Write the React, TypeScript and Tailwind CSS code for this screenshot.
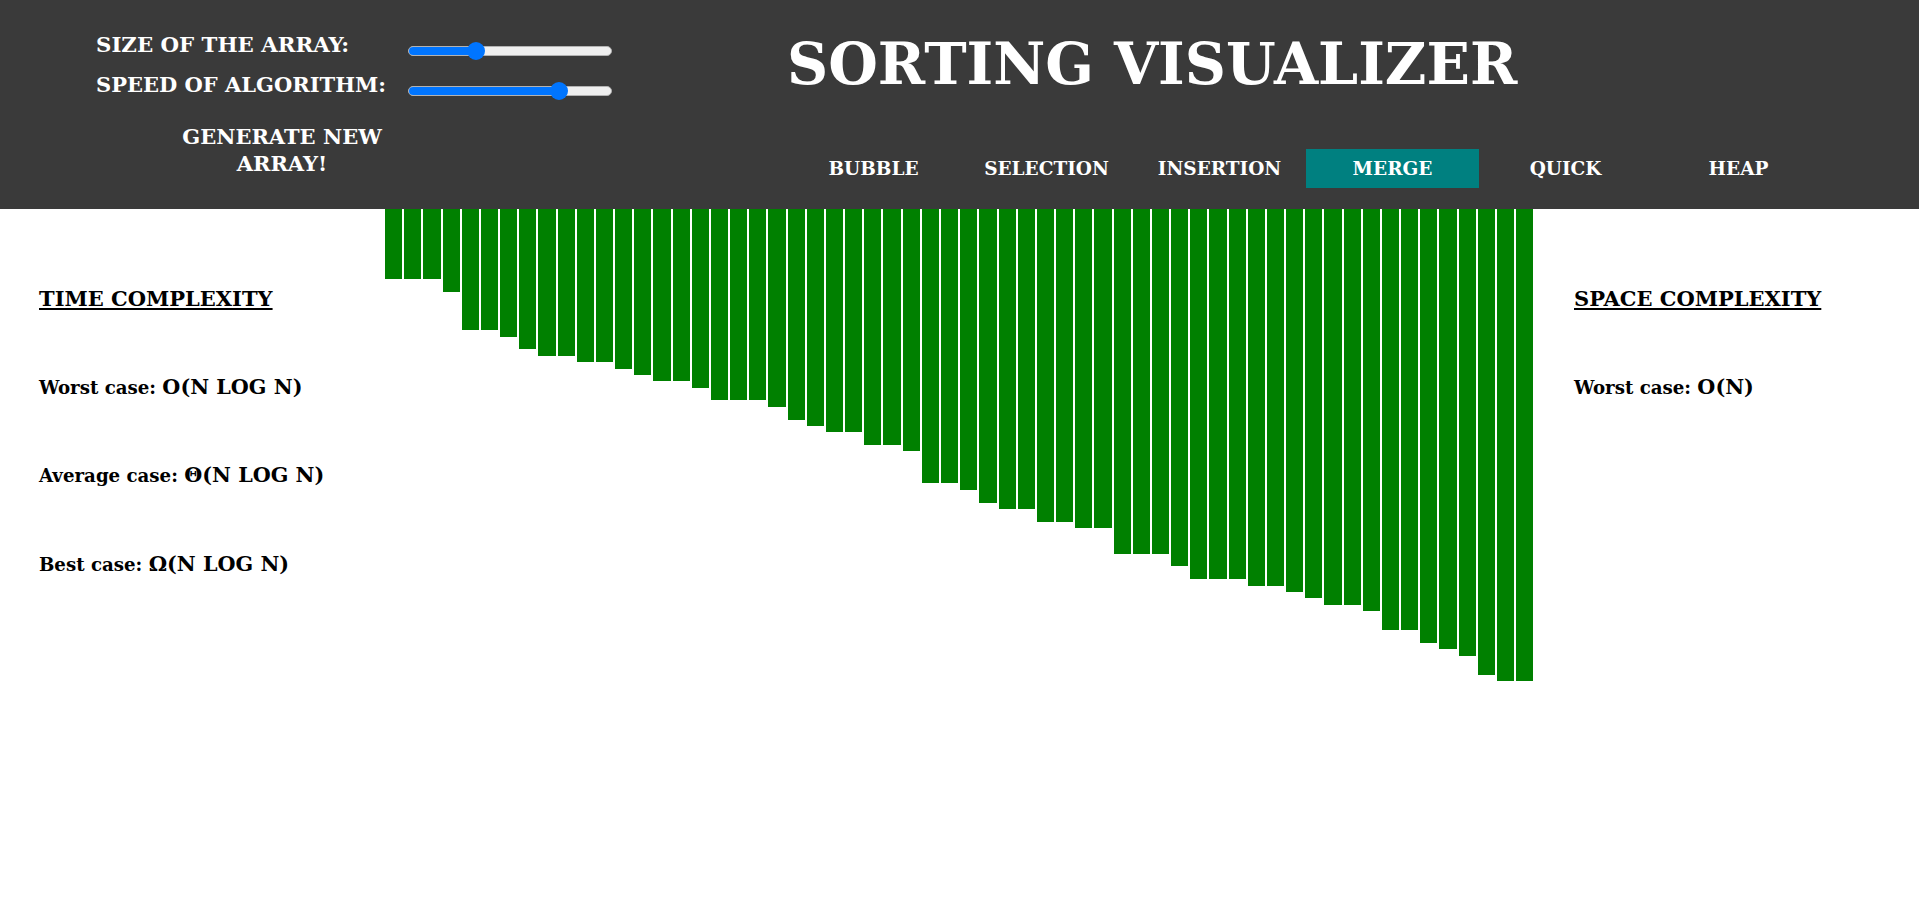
import React from 'react';

const barHeights = [
  70, 70, 70, 83, 121, 121, 128, 140, 147, 147, 153, 153, 160, 166, 172, 172, 179, 191, 191, 191,
  198, 211, 217, 223, 223, 236, 236, 242, 274, 274, 281, 294, 300, 300, 313, 313, 319, 319, 345, 345,
  345, 357, 370, 370, 370, 377, 377, 383, 389, 396, 396, 402, 421, 421, 434, 440, 447, 466, 472, 472,
];

const algorithms = ['BUBBLE', 'SELECTION', 'INSERTION', 'MERGE', 'QUICK', 'HEAP'];

function Slider({ value }: { value: number }) {
  // value 0..1, thumb centre sits at 9px + value * (204 - 18)
  const pos = 9 + value * 186;
  return (
    <div className="relative w-[204px] h-[10px] mt-[15px] rounded-full border border-[#b2b2b2] bg-[#efefef]">
      <div className="h-full rounded-full bg-[#0075ff]" style={{ width: pos }} />
      <div
        className="absolute top-[-5px] w-[18px] h-[18px] rounded-full bg-[#0075ff]"
        style={{ left: pos - 9 }}
      />
    </div>
  );
}

function Header({ selected }: { selected: string }) {
  return (
    <header className="flex h-[209px] bg-[#3a3a3a] text-white font-bold">
      {/* controls */}
      <div className="w-[787px] flex flex-col pt-[31px] pl-[96px]">
        <div className="flex h-[28px]">
          <div className="w-[312px] text-[21.3px] leading-[28px]">SIZE OF THE ARRAY:</div>
          <Slider value={0.31} />
        </div>
        <div className="flex h-[28px] mt-[12px]">
          <div className="w-[312px] text-[21px] leading-[28px]">SPEED OF ALGORITHM:</div>
          <Slider value={0.76} />
        </div>
        <button className="w-[240px] ml-[66px] mt-[24px] text-center text-[21px] leading-[27px] font-bold">
          GENERATE NEW ARRAY!
        </button>
      </div>

      {/* title + algorithm picker */}
      <div className="flex flex-col pt-[35px]">
        <h1 className="text-[57px] leading-[57px] font-bold">SORTING VISUALIZER</h1>
        <nav className="flex mt-[57px]">
          {algorithms.map((name) => (
            <button
              key={name}
              className={`w-[173px] h-[39px] flex items-center justify-center text-[18.5px] font-bold ${
                name === selected ? 'bg-[#008080]' : ''
              }`}
            >
              {name}
            </button>
          ))}
        </nav>
      </div>
    </header>
  );
}

function Row({ label, value }: { label: string; value: string }) {
  return (
    <div className="text-[20.7px] leading-[28px] font-bold whitespace-nowrap">
      <span className="text-[18.2px]">{label} </span>
      {value}
    </div>
  );
}

export default function App() {
  return (
    <div className="min-h-[906px] bg-white text-black font-['DejaVu_Serif','Liberation_Serif',serif]">
      <Header selected="MERGE" />

      <main className="flex items-start">
        <section className="w-[384px] flex flex-col gap-[59.5px] pt-[76px] pl-[39px]">
          <h2 className="text-[21px] leading-[28px] font-bold underline">TIME COMPLEXITY</h2>
          <Row label="Worst case:" value="O(N LOG N)" />
          <Row label="Average case:" value="Θ(N LOG N)" />
          <Row label="Best case:" value="Ω(N LOG N)" />
        </section>

        <div className="w-[1150px] flex items-start">
          {barHeights.map((h, i) => (
            <div key={i} className="flex-1 mx-px bg-[#008000]" style={{ height: h }} />
          ))}
        </div>

        <section className="flex flex-col gap-[59.5px] pt-[76px] pl-[40px]">
          <h2 className="text-[21px] leading-[28px] font-bold underline">SPACE COMPLEXITY</h2>
          <Row label="Worst case:" value="O(N)" />
        </section>
      </main>
    </div>
  );
}
